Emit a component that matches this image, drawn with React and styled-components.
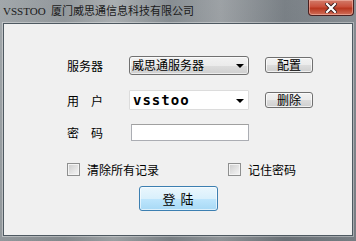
import React from 'react';
import styled, { createGlobalStyle } from 'styled-components';

const GlobalStyle = createGlobalStyle`
  html, body {
    margin: 0;
    padding: 0;
    width: 356px;
    height: 241px;
    overflow: hidden;
  }
  body {
    font-family: "Noto Sans CJK SC", "Noto Sans", sans-serif;
    font-size: 12px;
    color: #000;
  }
`;

const cjk = `"Noto Sans CJK SC", "Noto Sans", sans-serif`;

const Window = styled.div`
  width: 356px;
  height: 241px;
  display: flex;
  flex-direction: column;
  background:
    linear-gradient(180deg, rgba(255,255,255,0.08) 0%, rgba(0,0,0,0.05) 100%),
    linear-gradient(90deg, #9aa0a4 0%, #8a9094 18%, #a3a8ab 32%, #7e858a 48%, #959a9e 62%, #6f767c 80%, #7d848a 100%);
`;

const TitleBar = styled.div`
  height: 23px;
  display: flex;
  align-items: flex-start;
  justify-content: space-between;
  padding-left: 3px;
  padding-right: 2px;
`;

const Title = styled.div`
  margin-top: 4px;
  font-family: "Liberation Serif", ${cjk};
  font-size: 11px;
  line-height: 14px;
  color: #1a1a1a;
  white-space: pre;
`;

const CloseButton = styled.div`
  width: 46px;
  height: 16px;
  box-sizing: border-box;
  border: 1px solid #4a2020;
  border-top: none;
  border-radius: 0 0 4px 4px;
  background: linear-gradient(180deg, #d27b6a 0%, #c9503c 45%, #b8361f 55%, #d0705a 100%);
  box-shadow: inset 0 0 0 1px rgba(255, 210, 200, 0.45);
  display: flex;
  align-items: center;
  justify-content: center;
`;

const Frame = styled.div`
  flex: 1;
  display: flex;
  padding: 0 3px 5px 3px;
`;

const Client = styled.div`
  flex: 1;
  background: #f0f0f0;
  border: 1px solid #4e5961;
  box-shadow: 0 0 0 1px rgba(255, 255, 255, 0.35);
  display: flex;
  flex-direction: column;
  align-items: stretch;
  padding: 31px 0 0 63px;
`;

const FormGrid = styled.div`
  display: grid;
  grid-template-columns: 46px 120px 48px;
  column-gap: 16px;
  grid-auto-rows: 20px;
  row-gap: 15px;
  align-items: center;
`;

const Label = styled.div`
  font-family: ${cjk};
  font-size: 12px;
  line-height: 17px;
  align-self: ${p => (p.top ? 'start' : 'center')};
  margin-top: ${p => (p.top ? '-1px' : '0')};
  white-space: pre;
`;

const Combo = styled.div`
  height: ${p => (p.editable ? '20px' : '19px')};
  box-sizing: border-box;
  border: 1px solid ${p => (p.editable ? '#dcdcdc' : '#707070')};
  border-radius: ${p => (p.editable ? '1px' : '3px')};
  background: ${p =>
    p.editable
      ? '#ffffff'
      : 'linear-gradient(180deg, #f2f2f2 0%, #ebebeb 50%, #dddddd 51%, #cfcfcf 100%)'};
  box-shadow: ${p => (p.editable ? 'none' : 'inset 0 0 0 1px rgba(255,255,255,0.6)')};
  display: flex;
  align-items: center;
  justify-content: space-between;
  padding: 0 4px 0 2px;
`;

const ComboText = styled.span`
  font-family: ${cjk};
  font-size: 12px;
  line-height: 16px;
`;

const UserText = styled.span`
  font-family: "DejaVu Sans Mono", "Liberation Mono", monospace;
  font-weight: bold;
  font-size: 14px;
  letter-spacing: 1px;
  line-height: 16px;
  padding-left: 1px;
`;

const Arrow = styled.span`
  width: 0;
  height: 0;
  border-left: 4px solid transparent;
  border-right: 4px solid transparent;
  border-top: 4px solid #000;
  margin-top: 1px;
`;

const SmallButton = styled.div`
  height: 16px;
  box-sizing: border-box;
  border: 1px solid #707070;
  border-radius: 3px;
  background: linear-gradient(180deg, #f2f2f2 0%, #ebebeb 50%, #dddddd 51%, #cfcfcf 100%);
  box-shadow: inset 0 0 0 1px rgba(255,255,255,0.7);
  display: flex;
  align-items: center;
  justify-content: center;
  font-family: ${cjk};
  font-size: 12px;
  line-height: 14px;
`;

const PasswordInput = styled.div`
  align-self: start;
  margin: -1px 0 0 2px;
  height: 17px;
  box-sizing: border-box;
  border: 1px solid #abadb3;
  border-top-color: #a0a0a0;
  background: #ffffff;
`;

const CheckRow = styled.div`
  display: flex;
  align-items: center;
  margin-top: 18px;
  height: 13px;
`;

const CheckItem = styled.label`
  display: flex;
  align-items: center;
  gap: 7px;
  width: ${p => p.width || 'auto'};
  font-family: ${cjk};
  font-size: 12px;
  line-height: 14px;
`;

const Box = styled.span`
  width: 13px;
  height: 13px;
  box-sizing: border-box;
  border: 1px solid #8e8f8f;
  box-shadow: inset 0 0 0 1px #f4f4f4;
  background-image: linear-gradient(135deg, #cbcbcb 0%, #e6e6e6 60%, #f6f6f6 100%);
`;

const LoginRow = styled.div`
  display: flex;
  justify-content: center;
  margin: 10px 0 0 -63px;
`;

const LoginButton = styled.div`
  width: 79px;
  height: 25px;
  box-sizing: border-box;
  border: 1px solid #3c7fb1;
  border-radius: 3px;
  background: linear-gradient(180deg, #eaf6fd 0%, #d9f0fc 50%, #bee6fd 51%, #a7d9f5 100%);
  box-shadow: inset 0 0 0 1px rgba(255,255,255,0.6);
  display: flex;
  align-items: center;
  justify-content: center;
  font-family: ${cjk};
  font-size: 13px;
  letter-spacing: 5px;
  padding-left: 5px;
`;

function CloseIcon() {
  return (
    <svg width="12" height="10" viewBox="0 0 12 10">
      <path d="M2 1 L10 9 M10 1 L2 9" stroke="#3a1a1a" strokeWidth="4" strokeLinecap="square" />
      <path d="M2 1 L10 9 M10 1 L2 9" stroke="#ffffff" strokeWidth="2.2" strokeLinecap="square" />
    </svg>
  );
}

export default function App() {
  return (
    <>
      <GlobalStyle />
      <Window>
        <TitleBar>
          <Title>{'VSSTOO  厦门威思通信息科技有限公司'}</Title>
          <CloseButton>
            <CloseIcon />
          </CloseButton>
        </TitleBar>
        <Frame>
          <Client>
            <FormGrid>
              <Label>服务器</Label>
              <Combo>
                <ComboText>威思通服务器</ComboText>
                <Arrow />
              </Combo>
              <SmallButton>配置</SmallButton>

              <Label>{'用\u3000户'}</Label>
              <Combo editable>
                <UserText>vsstoo</UserText>
                <Arrow />
              </Combo>
              <SmallButton>删除</SmallButton>

              <Label top>{'密\u3000码'}</Label>
              <PasswordInput />
              <span />
            </FormGrid>
            <CheckRow>
              <CheckItem width="161px">
                <Box />
                清除所有记录
              </CheckItem>
              <CheckItem>
                <Box />
                记住密码
              </CheckItem>
            </CheckRow>
            <LoginRow>
              <LoginButton>登陆</LoginButton>
            </LoginRow>
          </Client>
        </Frame>
      </Window>
    </>
  );
}
